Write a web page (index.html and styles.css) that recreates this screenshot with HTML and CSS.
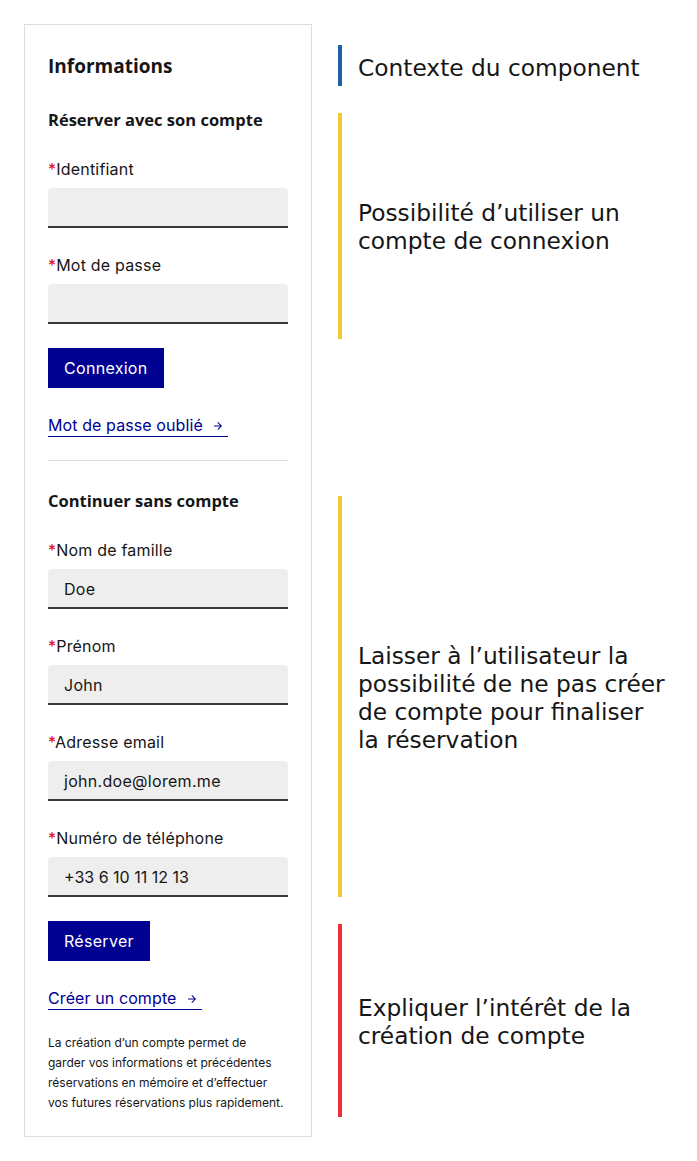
FILE: index.html
```html
<!DOCTYPE html>
<html lang="fr">
<head>
<meta charset="utf-8">
<title>Informations</title>
<link rel="stylesheet" href="styles.css">
</head>
<body>
<div class="page">
  <section class="card">
    <h2 class="title">Informations</h2>
    <h3 class="subtitle">Réserver avec son compte</h3>
    <div class="field">
      <label class="label"><span class="req">*</span>Identifiant</label>
      <div class="input"></div>
    </div>
    <div class="field">
      <label class="label"><span class="req">*</span>Mot de passe</label>
      <div class="input"></div>
    </div>
    <button class="btn">Connexion</button>
    <div class="linkrow">
      <a class="link" href="#">Mot de passe oublié
        <svg class="arrow" viewBox="0 0 24 24"><path d="M16.172 11l-5.364-5.364 1.414-1.414L20 12l-7.778 7.778-1.414-1.414L16.172 13H4v-2z"/></svg>
      </a>
    </div>
    <hr class="divider">
    <h3 class="subtitle sub2">Continuer sans compte</h3>
    <div class="field">
      <label class="label"><span class="req">*</span>Nom de famille</label>
      <div class="input">Doe</div>
    </div>
    <div class="field">
      <label class="label"><span class="req">*</span>Prénom</label>
      <div class="input">John</div>
    </div>
    <div class="field">
      <label class="label"><span class="req">*</span>Adresse email</label>
      <div class="input">john.doe@lorem.me</div>
    </div>
    <div class="field">
      <label class="label"><span class="req">*</span>Numéro de téléphone</label>
      <div class="input phone">+33 6 10 11 12 13</div>
    </div>
    <button class="btn">Réserver</button>
    <div class="linkrow">
      <a class="link" href="#">Créer un compte
        <svg class="arrow" viewBox="0 0 24 24"><path d="M16.172 11l-5.364-5.364 1.414-1.414L20 12l-7.778 7.778-1.414-1.414L16.172 13H4v-2z"/></svg>
      </a>
    </div>
    <p class="note">La création d’un compte permet de<br>garder vos informations et précédentes<br>réservations en mémoire et d’effectuer<br>vos futures réservations plus rapidement.</p>
  </section>
  <aside class="notes">
    <div class="ann ann-blue"><p>Contexte du component</p></div>
    <div class="ann ann-yellow a2"><p>Possibilité d’utiliser un<br>compte de connexion</p></div>
    <div class="ann ann-yellow a3"><p>Laisser à l’utilisateur la<br>possibilité de ne pas créer<br>de compte pour finaliser<br>la réservation</p></div>
    <div class="ann ann-red a4"><p>Expliquer l’intérêt de la<br>création de compte</p></div>
  </aside>
</div>
</body>
</html>
```

FILE: styles.css
```css
* { box-sizing: border-box; }
html, body { margin: 0; padding: 0; background: #ffffff; }
body { font-family: Inter, "Open Sans", sans-serif; color: #161616; }

.page {
  display: flex;
  align-items: flex-start;
  padding: 24px 0 0 24px;
  gap: 26px;
}

.card {
  width: 288px;
  border: 1px solid #dddddd;
  padding: 27px 23px 23px 23px;
  display: flex;
  flex-direction: column;
  align-items: flex-start;
}

.title {
  margin: 0;
  font-family: "Open Sans", sans-serif;
  font-size: 19px;
  line-height: 28px;
  font-weight: 700;
  color: #161616;
}
.subtitle {
  margin: 28px 0 0 0;
  font-family: "Open Sans", sans-serif;
  font-size: 16.5px;
  line-height: 24px;
  font-weight: 700;
  color: #161616;
}
.sub2 { margin-top: 28px; }

.field {
  width: 100%;
  margin-top: 25px;
  display: flex;
  flex-direction: column;
}
.label {
  font-size: 16px;
  line-height: 24px;
  letter-spacing: 0.2px;
  color: #161616;
  margin-bottom: 7px;
}
.req { color: #e1000f; }
.input {
  height: 40px;
  width: 100%;
  background: #eeeeee;
  border-radius: 4px 4px 0 0;
  border-bottom: 2px solid #3a3a3a;
  padding: 0 16px;
  font-size: 16px;
  letter-spacing: 0.3px;
  line-height: 40px;
  color: #161616;
}
.phone { letter-spacing: 0; }

.btn {
  margin-top: 24px;
  height: 40px;
  padding: 0 16px;
  border: 0;
  border-radius: 0;
  background: #000091;
  color: #ffffff;
  font-family: inherit;
  font-size: 16px;
  letter-spacing: 0.3px;
  font-weight: 400;
}

.linkrow { margin-top: 26px; display: flex; }
.link {
  display: inline-flex;
  align-items: center;
  gap: 9px;
  height: 23px;
  color: #000091;
  text-decoration: none;
  border-bottom: 1px solid #000091;
  font-size: 16px;
  letter-spacing: 0.1px;
  line-height: 22px;
  padding-right: 4px;
}
.arrow { width: 12px; height: 12px; fill: #000091; margin-top: 2px; }

.divider {
  width: 100%;
  margin: 23px 0 0 0;
  border: 0;
  border-top: 1px solid #dddddd;
  height: 0;
}

.note {
  margin: 23px 0 0 0;
  font-size: 12px;
  line-height: 20px;
  color: #161616;
}

.notes {
  display: flex;
  flex-direction: column;
  padding-top: 21px;
}
.ann {
  border-left: 4px solid;
  padding-left: 16px;
  padding-top: 2px;
  display: flex;
  align-items: center;
}
.ann p {
  margin: 0;
  font-family: "DejaVu Sans", Inter, sans-serif;
  font-size: 23.3px;
  line-height: 28px;
  white-space: nowrap;
  color: #161616;
  font-weight: 400;
}
.ann-blue { border-color: #1f5fa3; height: 41px; padding-top: 4px; }
.ann-yellow { border-color: #f2c833; }
.ann-red { border-color: #ee2f37; }
.a2 { margin-top: 27px; height: 226px; }
.a3 { margin-top: 157px; height: 401px; }
.a4 { margin-top: 27px; height: 193px; }
```
